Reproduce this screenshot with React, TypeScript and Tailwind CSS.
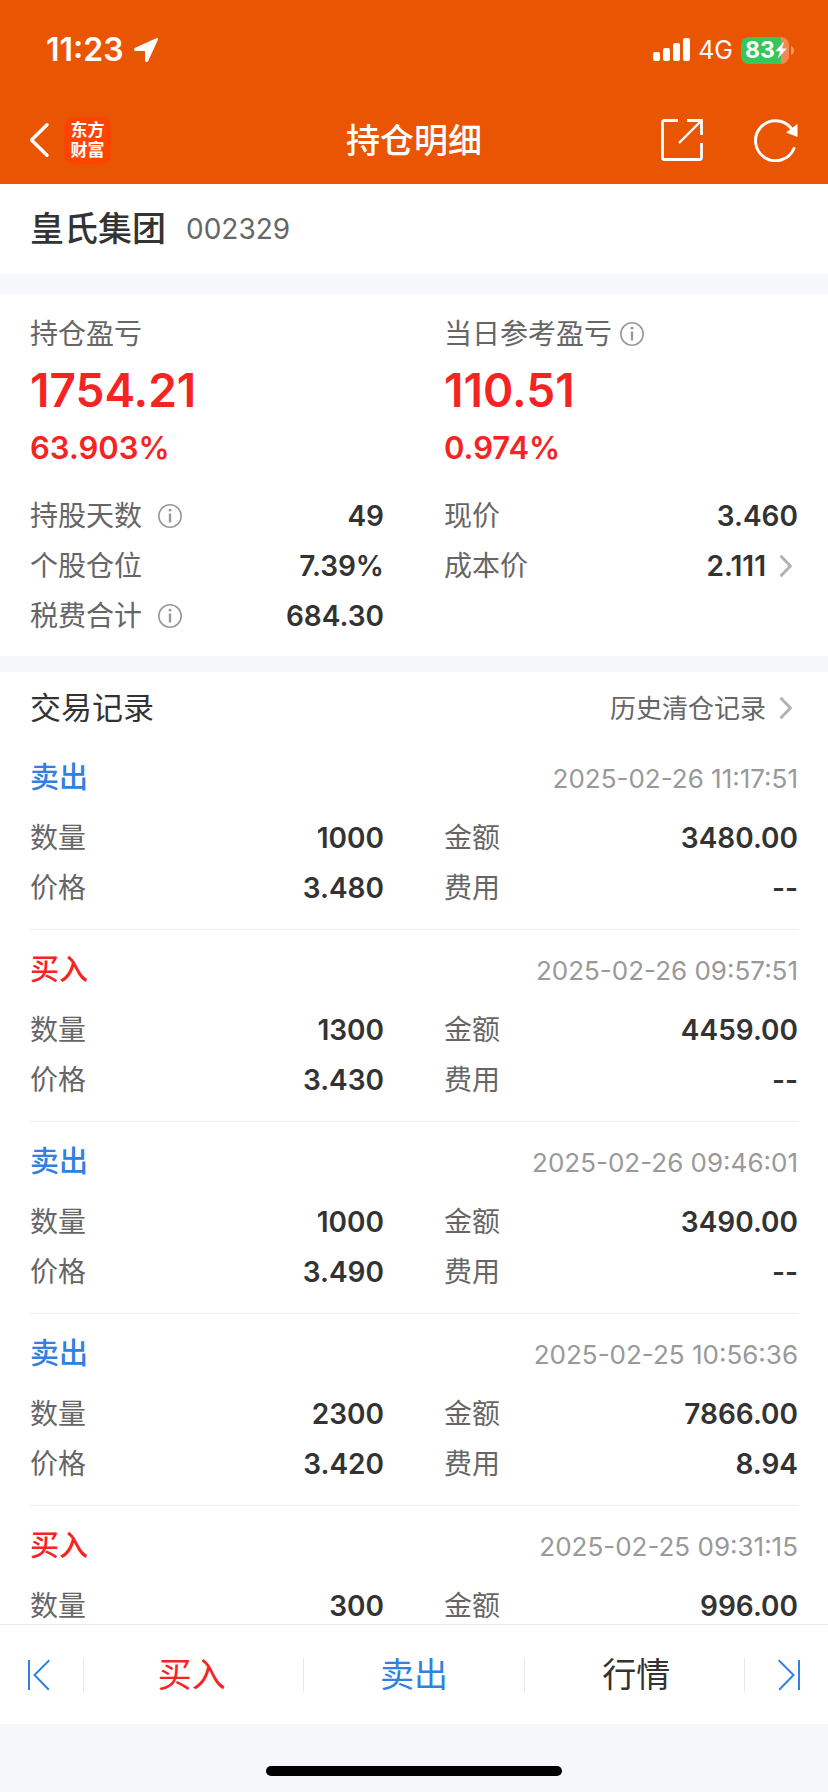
import type { ReactNode } from "react";

type Side = "buy" | "sell";

type Trade = {
  side: Side;
  time: string;
  quantity: string;
  amount: string;
  price?: string;
  fee?: string;
};

const trades: Trade[] = [
  { side: "sell", time: "2025-02-26 11:17:51", quantity: "1000", amount: "3480.00", price: "3.480", fee: "--" },
  { side: "buy", time: "2025-02-26 09:57:51", quantity: "1300", amount: "4459.00", price: "3.430", fee: "--" },
  { side: "sell", time: "2025-02-26 09:46:01", quantity: "1000", amount: "3490.00", price: "3.490", fee: "--" },
  { side: "sell", time: "2025-02-25 10:56:36", quantity: "2300", amount: "7866.00", price: "3.420", fee: "8.94" },
  { side: "buy", time: "2025-02-25 09:31:15", quantity: "300", amount: "996.00" },
];

function InfoIcon() {
  return (
    <svg viewBox="0 0 24 24" className="size-6" fill="none" stroke="#999999" aria-hidden="true">
      <circle cx="12" cy="12" r="11.2" strokeWidth="1.6" />
      <path d="M12 9.5V18.5" strokeWidth="2.4" />
      <circle cx="12" cy="6.2" r="1.4" fill="#999999" stroke="none" />
    </svg>
  );
}

function Chevron() {
  return (
    <svg viewBox="0 0 12 22" className="h-[22px] w-3" fill="none" stroke="#b2b2b2" strokeWidth="3" strokeLinecap="round" strokeLinejoin="round" aria-hidden="true">
      <path d="M1.5 1.7L10.4 11L1.5 20.3" />
    </svg>
  );
}

function StatusBar() {
  return (
    <div className="flex h-24 items-center justify-between pt-1 pr-[34px] pl-[46px]">
      <div className="flex items-center gap-2.5">
        <span className="text-[32px] leading-10 font-semibold">11:23</span>
        <svg viewBox="0 0 24 24" className="size-6" fill="currentColor" aria-hidden="true">
          <path d="M22.2.2L1.2 9.8C-.5 10.6-.2 13 1.7 13H10.2C10.7 13 11 13.3 11 13.8V22.2C11 24.2 13.4 24.6 14.2 22.9L23.9 1.8C24.3.7 23.3-.3 22.2.2Z" />
        </svg>
      </div>
      <div className="flex items-center">
        <svg viewBox="0 0 37 24" className="h-6 w-[37px]" fill="currentColor" aria-hidden="true">
          <rect x="0" y="14" width="7" height="9" rx="2" />
          <rect x="10" y="10" width="7" height="13" rx="2" />
          <rect x="20" y="5" width="7" height="18" rx="2" />
          <rect x="30" y="0" width="7" height="23" rx="2" />
        </svg>
        <span className="ml-2 text-[25px] leading-8">4G</span>
        <div className="ml-2 flex h-[27px] w-12 items-center overflow-hidden rounded-lg bg-linear-to-r from-[#34c759] from-83% to-white/30 to-83% pl-1">
          <span className="text-[23px] leading-7 font-bold">83</span>
          <svg viewBox="0 0 12 18" className="h-[18px] w-3" fill="currentColor" aria-hidden="true">
            <path d="M9.3.2L.3 10.2H5L2.6 17.8L11.8 7.4H7Z" />
          </svg>
        </div>
        <svg viewBox="0 0 3 9" className="ml-0.5 h-[9px] w-[3px]" fill="currentColor" fillOpacity="0.4" aria-hidden="true">
          <path d="M0 0C4 1.2 4 7.8 0 9Z" />
        </svg>
      </div>
    </div>
  );
}

function NavBar() {
  return (
    <div className="grid h-[88px] grid-cols-[1fr_auto_1fr] items-center px-[30px]">
      <div className="flex items-center gap-[15px]">
        <button type="button" aria-label="返回">
          <svg viewBox="0 0 19 34" className="h-[34px] w-[19px]" fill="none" stroke="currentColor" strokeWidth="3.4" strokeLinecap="round" aria-hidden="true">
            <path d="M17 1.8L1.5 17L17 32.2" />
          </svg>
        </button>
        <div className="flex size-[47px] flex-col items-center justify-center rounded-[10px] bg-[#ff4400] text-[17px] leading-5 font-bold">
          <span>东方</span>
          <span>财富</span>
        </div>
      </div>
      <h1 className="pt-0.5 text-[34px] leading-10 font-medium">持仓明细</h1>
      <div className="flex items-center justify-end gap-[51px]">
        <button type="button" aria-label="分享">
          <svg viewBox="0 0 42 42" className="size-[42px]" fill="none" stroke="currentColor" strokeWidth="2.8" aria-hidden="true">
            <path d="M17 1.5H3.5Q1.5 1.5 1.5 3.5V38.5Q1.5 40.5 3.5 40.5H38.5Q40.5 40.5 40.5 38.5V24" />
            <path d="M26 1.5H40.5V16" />
            <path d="M40 2L18 24" strokeWidth="2.4" />
          </svg>
        </button>
        <button type="button" aria-label="刷新">
          <svg viewBox="0 0 44 44" className="size-11" fill="none" stroke="currentColor" strokeWidth="3" aria-hidden="true">
            <path d="M40 30.5A20 20 0 1 1 37 10" strokeLinecap="round" />
            <path d="M43.5 6V19L32 14.5Z" fill="currentColor" stroke="none" />
          </svg>
        </button>
      </div>
    </div>
  );
}

function Pair({ label, value, info, link }: { label: string; value: string; info?: boolean; link?: boolean }) {
  return (
    <div className="flex h-[50px] items-center justify-between">
      <dt className="flex items-center gap-4 text-[28px] text-[#666666]">
        {label}
        {info && <InfoIcon />}
      </dt>
      <dd className="flex items-center gap-3.5 text-[28px] font-semibold text-[#333333]">
        {value}
        {link && (
          <span className="pr-1.5">
            <Chevron />
          </span>
        )}
      </dd>
    </div>
  );
}

function Profit({ label, amount, percent }: { label: ReactNode; amount: string; percent: string }) {
  return (
    <div>
      <h2 className="flex h-10 items-center gap-2 text-[28px] text-[#666666]">{label}</h2>
      <p className="mt-2 text-[46px] leading-14 font-semibold text-[#f62323]">{amount}</p>
      <p className="mt-2.5 text-[31px] leading-10 font-semibold text-[#f62323]">{percent}</p>
    </div>
  );
}

function TradeItem({ trade }: { trade: Trade }) {
  return (
    <li className="border-b border-[#eeeeee] pt-[15px] pb-4">
      <div className="flex h-[50px] items-center justify-between">
        {trade.side === "buy" ? (
          <h3 className="text-[29px] font-medium text-[#f62323]">买入</h3>
        ) : (
          <h3 className="text-[29px] font-medium text-[#3081e3]">卖出</h3>
        )}
        <time className="text-[26px] text-[#999999]">{trade.time}</time>
      </div>
      <dl className="mt-2.5 grid grid-cols-2 gap-x-[60px]">
        <Pair label="数量" value={trade.quantity} />
        <Pair label="金额" value={trade.amount} />
        {trade.price && <Pair label="价格" value={trade.price} />}
        {trade.fee && <Pair label="费用" value={trade.fee} />}
      </dl>
    </li>
  );
}

function Separator() {
  return <div className="h-[34px] bg-[#e8e8e8]" />;
}

function BottomBar() {
  return (
    <footer className="shrink-0 bg-[#f6f7fa]">
      <nav className="grid h-[100px] grid-cols-[83px_1px_1fr_1px_1fr_1px_1fr_1px_83px] items-center border-t border-[#eaeaea] bg-white text-[34px]">
        <button type="button" aria-label="上一只" className="flex pl-7 text-[#3081e3]">
          <svg viewBox="0 0 22 32" className="h-8 w-[22px]" fill="none" stroke="currentColor" strokeWidth="2" aria-hidden="true">
            <path d="M1 1V31M21.3 1.3L6.5 16L20.8 30.7" />
          </svg>
        </button>
        <Separator />
        <button type="button" className="pr-1 text-[#f62323]">买入</button>
        <Separator />
        <button type="button" className="text-[#3081e3]">卖出</button>
        <Separator />
        <button type="button" className="pl-1 text-[#333333]">行情</button>
        <Separator />
        <button type="button" aria-label="下一只" className="flex justify-end pr-7 text-[#3081e3]">
          <svg viewBox="0 0 22 32" className="h-8 w-[22px]" fill="none" stroke="currentColor" strokeWidth="2" aria-hidden="true">
            <path d="M21 1V31M.7 1.3L15.5 16L1.2 30.7" />
          </svg>
        </button>
      </nav>
      <div className="flex h-[68px] items-end justify-center pb-4">
        <div className="h-2.5 w-[296px] rounded-full bg-black" />
      </div>
    </footer>
  );
}

export default function App() {
  return (
    <div className="flex h-screen flex-col bg-white font-['Inter','Noto_Sans_CJK_SC',sans-serif] text-[#333333]">
      <header className="shrink-0 bg-[#ea5504] text-white">
        <StatusBar />
        <NavBar />
      </header>

      <main className="min-h-0 flex-1 overflow-y-auto [scrollbar-width:none]">
        <section className="flex h-[90px] items-center gap-5 px-[30px]">
          <h2 className="text-[34px] leading-10 font-medium">皇氏集团</h2>
          <span className="text-[28px] leading-10 text-[#666666]">002329</span>
        </section>

        <section className="border-t-[20px] border-[#f6f7fa] px-[30px] pt-5 pb-[15px]">
          <div className="grid grid-cols-2 gap-x-[60px]">
            <Profit label="持仓盈亏" amount="1754.21" percent="63.903%" />
            <Profit
              label={
                <>
                  当日参考盈亏
                  <InfoIcon />
                </>
              }
              amount="110.51"
              percent="0.974%"
            />
          </div>
          <dl className="mt-[23px] grid grid-cols-2 gap-x-[60px]">
            <Pair label="持股天数" value="49" info />
            <Pair label="现价" value="3.460" />
            <Pair label="个股仓位" value="7.39%" />
            <Pair label="成本价" value="2.111" link />
            <Pair label="税费合计" value="684.30" info />
          </dl>
        </section>

        <section className="border-t-[16px] border-[#f6f7fa] px-[30px]">
          <div className="flex h-[66px] items-center justify-between pt-1.5">
            <h2 className="text-[31px]">交易记录</h2>
            <a href="#history" className="flex items-center gap-3.5 pr-1.5 text-[26px] text-[#666666]">
              历史清仓记录
              <Chevron />
            </a>
          </div>
          <ul>
            {trades.map((trade) => (
              <TradeItem key={trade.time} trade={trade} />
            ))}
          </ul>
        </section>
      </main>

      <BottomBar />
    </div>
  );
}
